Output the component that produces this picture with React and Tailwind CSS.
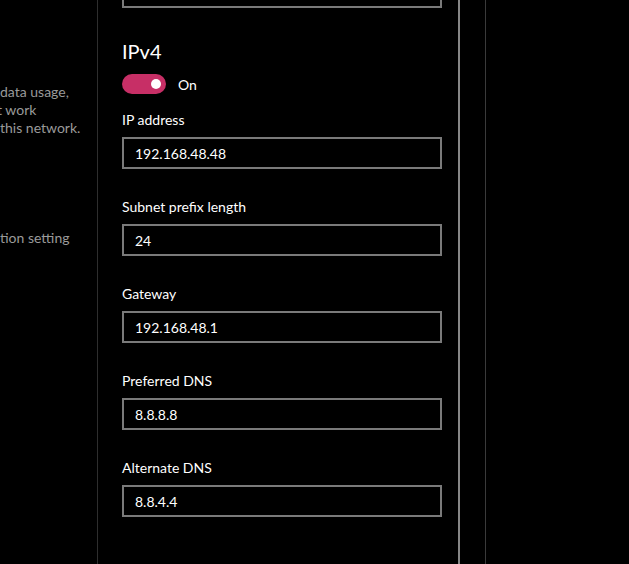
import React from "react";

const font = { fontFamily: "Lato, 'Open Sans', sans-serif" };

function Field({ label, value, first }) {
  return (
    <div className={first ? "mt-[16px]" : "mt-[28px]"}>
      <div className="h-[20px] text-[14px] leading-[20px] text-white">{label}</div>
      <div className="mt-[7px] flex h-[32px] w-[320px] items-center border-2 border-[#7a7a7a] pl-[11px] text-[14px] text-white">
        {value}
      </div>
    </div>
  );
}

export default function App() {
  return (
    <div
      className="flex h-[564px] w-[629px] overflow-hidden bg-black"
      style={font}
    >
      <div className="w-[98px] shrink-0 overflow-hidden border-r border-[#2e2e2e] text-[14px] leading-[18px] text-[#9a9a9a]">
        <div className="mt-[83px] whitespace-nowrap">data usage,</div>
        <div className="ml-[-3px] whitespace-nowrap">t work</div>
        <div className="whitespace-nowrap">this network.</div>
        <div className="mt-[92px] whitespace-nowrap">tion setting</div>
      </div>
      <div className="w-[360px] shrink-0 pl-[24px]">
        <div className="mt-[-24px] h-[32px] w-[320px] border-2 border-[#7a7a7a]" />
        <div className="mt-[29px] h-[28px] text-[20px] leading-[28px] text-white">IPv4</div>
        <div className="mt-[9px] flex h-[20px] items-center">
          <div className="relative h-[20px] w-[44px] rounded-full bg-[#c72f66]">
            <div className="absolute left-[29px] top-[5px] h-[10px] w-[10px] rounded-full bg-white" />
          </div>
          <span className="ml-[12px] text-[14px] text-white">On</span>
        </div>
        <Field first label="IP address" value="192.168.48.48" />
        <Field label="Subnet prefix length" value="24" />
        <Field label="Gateway" value="192.168.48.1" />
        <Field label="Preferred DNS" value="8.8.8.8" />
        <Field label="Alternate DNS" value="8.8.4.4" />
      </div>
      <div className="w-[2px] shrink-0 bg-[#878787]" />
      <div className="w-[26px] shrink-0 border-r border-[#3a3a3a]" />
      <div className="flex-1" />
    </div>
  );
}
